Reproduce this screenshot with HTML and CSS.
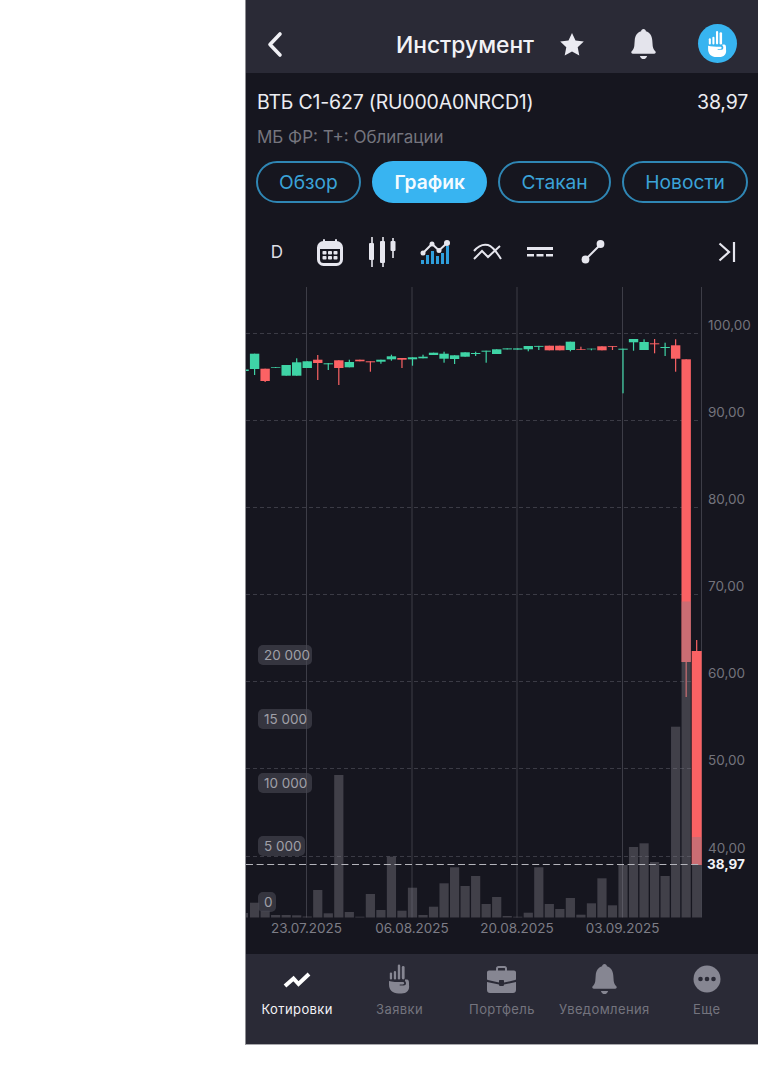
FILE: index.html
```html
<!DOCTYPE html>
<html>
<head>
    <title>Инструмент</title>
    <link rel="stylesheet" href="styles.css">
</head>
<body>
    <svg class="sprite" width="0" height="0">
        <symbol id="bell" viewBox="0 0 24 29">
            <path d="M12 0c1.3 0 2.2.9 2.3 2.2C18.200 3.300 20.200 6.600 20.500 11l.4 5.500c.2 2.300 1.300 3.700 2.500 5 .9 1 .3 2.500-1 2.500H1.600c-1.300 0-1.900-1.500-1-2.500 1.200-1.300 2.300-2.700 2.500-5l.4-5.500C3.800 6.600 5.800 3.300 9.700 2.200 9.800.9 10.700 0 12 0z"/>
            <path d="M8.500 26h7c-.5 1.800-1.900 3-3.500 3s-3-1.200-3.500-3z"/>
        </symbol>
        <symbol id="hand" viewBox="0 0 21 29">
            <rect x="0.800" y="8" width="2.300" height="7" rx="1.100"/>
            <rect x="4.800" y="6.500" width="2.300" height="8.500" rx="1.100"/>
            <rect x="8.800" y="0" width="2.400" height="15" rx="1.200"/>
            <rect x="12.800" y="1.500" width="2.800" height="13.500" rx="1.400"/>
            <path d="M0 16.500c3 1 8 1 13.500 1 1 0 1.700.5 1.700 1.300 0 .7-.6 1.200-1.500 1.200h-3v1h4c1.300 0 2.300-1 2.300-2.300 0-1-.4-1.700-1-2.200V15h2c1.400 0 2 1.300 2 3.500v2C21 25.500 17.500 29 12.500 29h-3C3.500 29 0 25.500 0 20z"/>
        </symbol>
    </svg>

    <div class="phone">
        <div class="header">
            <svg class="back" width="17" height="27" viewBox="0 0 17 27"><path d="M14 3L4 13.500 14 24"/></svg>
            <h1>Инструмент</h1>
            <svg class="star" width="26" height="25" viewBox="0 0 26 25"><path d="M13 1l3.500 7.600 8.300 1-6.100 5.700 1.600 8.200L13 19.400l-7.300 4.100 1.600-8.200L1.200 9.600l8.300-1z"/></svg>
            <svg class="bell" width="25" height="30"><use href="#bell"/></svg>
            <div class="avatar"><svg width="19" height="26"><use href="#hand"/></svg></div>
        </div>

        <div class="info">
            <div class="info-row">
                <span>ВТБ С1-627 (RU000A0NRCD1)</span>
                <span>38,97</span>
            </div>
            <div class="market">МБ ФР: Т+: Облигации</div>
        </div>

        <div class="tabs">
            <div class="tab">Обзор</div>
            <div class="tab active">График</div>
            <div class="tab">Стакан</div>
            <div class="tab">Новости</div>
        </div>

        <div class="toolbar">
            <div class="tool tool-text">D</div>
            <div class="tool">
                <svg width="26" height="27" viewBox="0 0 26 27">
                    <rect x="1.500" y="3.500" width="23" height="22" rx="5" fill="none" stroke="#e6e6ee" stroke-width="3"/>
                    <path d="M1.500 10V7.500a4 4 0 0 1 4-4h15a4 4 0 0 1 4 4V10z" fill="#e6e6ee"/>
                    <path d="M7 1v4M19 1v4" stroke="#e6e6ee" stroke-width="2" stroke-linecap="round"/>
                    <g fill="#e6e6ee">
                        <rect x="5.500" y="12" width="4" height="3.500" rx=".8"/><rect x="11" y="12" width="4" height="3.500" rx=".8"/><rect x="16.500" y="12" width="4" height="3.500" rx=".8"/>
                        <rect x="5.500" y="17" width="4" height="3.500" rx=".8"/><rect x="11" y="17" width="4" height="3.500" rx=".8"/><rect x="16.500" y="17" width="4" height="3.500" rx=".8"/>
                    </g>
                </svg>
            </div>
            <div class="tool">
                <svg width="28" height="30" viewBox="0 0 28 30" fill="#e6e6ee">
                    <rect x="3.200" y="0" width="1.600" height="30"/><rect x="1" y="6" width="5" height="17" rx="1"/>
                    <rect x="14.200" y="0" width="1.600" height="30"/><rect x="12" y="4" width="5" height="22" rx="1"/>
                    <rect x="24.200" y="1" width="1.600" height="20"/><rect x="22.500" y="4" width="5" height="10" rx="1"/>
                </svg>
            </div>
            <div class="tool">
                <svg width="30" height="24" viewBox="0 0 30 24">
                    <g fill="#2f9fdc">
                        <rect x="1" y="20" width="3" height="4"/><rect x="6" y="15" width="3" height="9"/><rect x="11" y="11" width="3" height="13"/><rect x="16" y="16" width="3" height="8"/><rect x="21" y="13" width="3" height="11"/><rect x="26" y="6" width="3" height="18"/>
                    </g>
                    <path d="M3 13L12 4l7 6.500L27 3" fill="none" stroke="#e6e6ee" stroke-width="2"/>
                    <g fill="#e6e6ee"><circle cx="3" cy="13" r="2.500"/><circle cx="12" cy="4" r="2.500"/><circle cx="19" cy="10.500" r="2.500"/><circle cx="27" cy="3" r="3"/></g>
                </svg>
            </div>
            <div class="tool">
                <svg width="29" height="18" viewBox="0 0 29 18" fill="none" stroke="#e6e6ee" stroke-width="2">
                    <path d="M1 8C6 2 11 1 15 2s8 6 13 14"/>
                    <path d="M1 16l8-8 6 6L27 3"/>
                </svg>
            </div>
            <div class="tool">
                <svg width="26" height="10" viewBox="0 0 26 10" fill="#e6e6ee">
                    <rect x="0" y="0" width="26" height="3"/>
                    <rect x="0" y="7" width="7" height="2.500"/><rect x="9.500" y="7" width="7" height="2.500"/><rect x="19" y="7" width="7" height="2.500"/>
                </svg>
            </div>
            <div class="tool">
                <svg width="24" height="24" viewBox="0 0 24 24" fill="#e6e6ee">
                    <path d="M4.500 19.500l15-15" stroke="#e6e6ee" stroke-width="2"/>
                    <circle cx="4.500" cy="19.500" r="3.900"/><circle cx="19.500" cy="4" r="3.900"/>
                </svg>
            </div>
            <div class="tool tool-end">
                <svg width="18" height="20" viewBox="0 0 18 20" fill="none" stroke="#e6e6ee" stroke-width="2.200">
                    <path d="M1.500 1.500L11 10l-9.500 8.500"/>
                    <path d="M16 0v20"/>
                </svg>
            </div>
        </div>

        <svg id="chart" class="chart" width="512" height="667" viewBox="246 287 512 667"></svg>

        <div class="nav">
            <div class="nav-item active">
                <svg width="30" height="30" viewBox="0 0 30 30"><path d="M3 22l8.500-7.500 5 5.500L27 10" fill="none" stroke="#fff" stroke-width="4"/></svg>
                <span>Котировки</span>
            </div>
            <div class="nav-item">
                <svg width="21" height="30"><use href="#hand"/></svg>
                <span>Заявки</span>
            </div>
            <div class="nav-item">
                <svg width="29" height="30" viewBox="0 0 29 30">
                    <path d="M9 7V4.500C9 3 10 2 11.500 2h6C19 2 20 3 20 4.500V7h-2V4.500c0-.3-.2-.5-.5-.5h-6c-.3 0-.5.2-.5.500V7z"/>
                    <path d="M2 6.500h25c1.100 0 2 .9 2 2V15c0 .6-.3 1-.9 1.100L17 18.500V17c0-.6-.4-1-1-1h-3c-.6 0-1 .4-1 1v1.500L.9 16.100C.3 16 0 15.600 0 15V8.500c0-1.100.9-2 2-2z"/>
                    <path d="M0 18l12 2.500c0 .8.4 1.500 1 1.500h3c.6 0 1-.7 1-1.500L29 18v8c0 1.700-1.300 3-3 3H3c-1.700 0-3-1.300-3-3z"/>
                </svg>
                <span>Портфель</span>
            </div>
            <div class="nav-item">
                <svg width="25" height="30"><use href="#bell"/></svg>
                <span>Уведомления</span>
            </div>
            <div class="nav-item">
                <svg width="30" height="30" viewBox="0 0 30 30">
                    <circle cx="15" cy="15" r="13.500"/>
                    <g fill="#2a2a36"><circle cx="8.500" cy="15" r="2.300"/><circle cx="15" cy="15" r="2.300"/><circle cx="21.500" cy="15" r="2.300"/></g>
                </svg>
                <span>Еще</span>
            </div>
        </div>
    </div>

    <script src="chart.js"></script>
</body>
</html>
```

FILE: styles.css
```css
* { box-sizing: border-box; }
html, body { margin: 0; background: white; }
body {
    padding-left: 245px;
    font-family: Inter, "Noto Sans", sans-serif;
    color: #e8e8ee;
}
.sprite { position: absolute; }
svg { display: block; }
.phone {
    width: 513px;
    height: 1045px;
    background: #16161f;
    border-left: 1px solid #8d8d92;
    border-bottom: 1px solid #a8a8ac;
    display: flex;
    flex-direction: column;
}

.header {
    height: 73px;
    flex: none;
    background: #2a2a36;
    display: flex;
    align-items: center;
    padding: 15px 20px 0 20px;
}
.back path {
    fill: none;
    stroke: #f0f0f5;
    stroke-width: 3.600;
    stroke-linecap: round;
    stroke-linejoin: round;
}
h1 {
    margin: 0 0 0 113px;
    width: 138px;
    white-space: nowrap;
    font-size: 22.800px;
    font-weight: 500;
    color: #f2f2f6;
}
.star { fill: #ebebf2; margin-left: 25px; }
.bell { fill: #e4e4ec; margin-left: 46px; }
.avatar {
    width: 39px;
    height: 39px;
    margin-left: 42px;
    margin-top: -1px;
    border-radius: 50%;
    background: #37b4f0;
    display: flex;
    align-items: center;
    justify-content: center;
    fill: white;
}

.info { padding: 16px 10px 0 11px; flex: none; }
.info-row {
    display: flex;
    justify-content: space-between;
    font-size: 19.500px;
    line-height: 26px;
    letter-spacing: -0.200px;
    color: #ecedf2;
}
.market {
    margin-top: 9px;
    font-size: 17px;
    line-height: 26px;
    color: #75757e;
}

.tabs {
    display: flex;
    justify-content: space-between;
    padding: 11px 10px 0 10px;
    flex: none;
}
.tab {
    height: 42px;
    padding: 0 21px;
    border: 2px solid #2f86b4;
    border-radius: 21px;
    font-size: 19.200px;
    line-height: 38px;
    color: #3ba3d8;
    white-space: nowrap;
}
.tab.active {
    background: #38b4f1;
    border-color: #38b4f1;
    color: #f4fbff;
    font-weight: 600;
    padding: 0 20px;
}

.toolbar {
    display: flex;
    align-items: center;
    height: 84px;
    padding: 14px 5px 0 4.600px;
    flex: none;
}
.tool {
    width: 52.700px;
    display: flex;
    justify-content: center;
    align-items: center;
}
.tool-text { font-size: 17px; color: #dedee4; }
.tool-end { margin-left: auto; }

.chart { flex: none; }
.chart text { font-family: Inter, "Noto Sans", sans-serif; }

.nav {
    flex: 1;
    background: #2a2a36;
    display: grid;
    grid-template-columns: repeat(5, 1fr);
    padding-top: 10px;
}
.nav-item {
    display: flex;
    flex-direction: column;
    align-items: center;
    gap: 7px;
    fill: #868692;
    font-size: 13px;
    line-height: 16px;
    letter-spacing: 0.400px;
    color: #74747e;
    white-space: nowrap;
}
.nav-item.active { color: #f2f2f6; }
```

FILE: chart.js
```js
// page coordinates are kept in the viewBox so the numbers read off the screenshot directly
var svg = document.getElementById('chart');
var NS = 'http://www.w3.org/2000/svg';
var GREEN = '#3fd4a6';
var RED = '#fb6264';
var BASE = 917.5;

function add(tag, attrs, text) {
    var el = document.createElementNS(NS, tag);
    for (var k in attrs) el.setAttribute(k, attrs[k]);
    if (text) el.textContent = text;
    svg.appendChild(el);
}

function barX(i) {
    return 254.6 + (i - 1) * 10.526;
}

// grid
[333, 420, 507, 594, 681, 768, 856].forEach(function (y, i) {
    add('line', { x1: 246, x2: 701, y1: y + .5, y2: y + .5, stroke: '#3b3b45', 'stroke-dasharray': '4 3' });
    add('text', { x: 708, y: y - 3, 'font-size': 13.5, fill: '#73737c' }, (100 - i * 10) + ',00');
});
[306.5, 412, 517, 622.5, 701.5].forEach(function (x) {
    add('line', { x1: x, x2: x, y1: 287, y2: BASE, stroke: '#3d3d47' });
});

// candles: [color, open-top, body-bottom, wick-top, wick-bottom]
var g = GREEN, r = RED;
var candles = [
    [g, 369.5, 371, 369, 375], [g, 353.7, 369, 353.7, 375], [r, 368.7, 381, 368.7, 382], [g, 367.3, 368, 367, 368],
    [g, 365, 375.7, 365, 375.7], [g, 362.3, 375.7, 358.3, 375.7], [g, 361.3, 368, 361.3, 368], [r, 359.7, 363, 355, 380],
    [g, 363.3, 364.3, 363, 370], [r, 360.3, 368, 360.3, 385], [g, 362, 367.3, 359.7, 367.3], [r, 359.7, 361.3, 359.7, 361.3],
    [r, 361.3, 362.3, 361.3, 371.7], [g, 359.7, 361.7, 359.7, 363.7], [g, 356.3, 359.3, 354.7, 360.7], [r, 358, 359.7, 358, 368],
    [g, 357.3, 359.3, 357.3, 365.7], [g, 356.7, 358.3, 354.7, 358.3], [g, 352.7, 355, 352.7, 355], [g, 353.7, 358.7, 351.7, 362.7],
    [g, 355.3, 359, 355.3, 364], [g, 352.3, 356.7, 352.3, 356.7], [g, 353, 354, 351.7, 356], [g, 350.7, 351.7, 350.7, 362.7],
    [g, 349.3, 354, 349.3, 354], [g, 348.4, 349.4, 348.4, 349.4], [g, 348.4, 349.6, 348.4, 349.6], [g, 346, 349.3, 346, 351.3],
    [g, 345.9, 346.8, 345.9, 350], [r, 345.7, 350.3, 345.7, 350.3], [r, 345.7, 350.3, 345.7, 350.3], [g, 341.7, 350, 341.7, 351.3],
    [r, 349.3, 350, 346.7, 350], [g, 348.7, 349.3, 348.7, 350.3], [r, 346.3, 350.3, 346.3, 350.3], [r, 346, 346.8, 346, 350],
    [g, 348.7, 349.7, 348.7, 393.3], [g, 339, 342.3, 339, 350.7], [g, 342, 350, 339.3, 350], [r, 343.3, 344.3, 339, 353.3],
    [g, 347, 348, 342.7, 356], [r, 345.3, 358.7, 339.3, 371.7], [r, 359.3, 662, 359.3, 697], [r, 651, 865, 640, 865]
];
candles.forEach(function (c, i) {
    var x = barX(i);
    var w = i === 43 ? 10 : 9.4;
    add('rect', { x: x - .6, y: c[3], width: 1.2, height: c[4] - c[3], fill: c[0] });
    add('rect', { x: x - w / 2, y: c[1], width: w, height: c[2] - c[1], fill: c[0] });
});

// volume, top edge of each bar
var tops = [913, 902.7, 910.7, 915, 915, 915.3, 916.5, 890, 913.3, 775, 912, 916.7, 894, 910, 856.7, 910.7,
    887.7, 915, 906.7, 883.3, 867.3, 886, 876, 904, 897, 916, 916.7, 912.7, 867.3, 904, 909, 898, 914.7,
    903.3, 878.3, 905.3, 865, 847, 843.3, 862, 876, 726.7, 601.5, 837];
tops.forEach(function (top, i) {
    var x = i === 0 ? 246 : barX(i) - 4.6;
    var w = i === 0 ? 2 : 9.2;
    add('rect', { x: x, y: top, width: w, height: BASE - top, fill: 'rgba(130,128,138,0.4)' });
});

// volume scale
[['20 000', 655, 54], ['15 000', 719, 54], ['10 000', 783, 54], ['5 000', 846, 47], ['0', 902, 18]].forEach(function (v) {
    add('rect', { x: 258, y: v[1] - 10, width: v[2], height: 20, rx: 5, fill: 'rgba(70,70,82,0.65)' });
    add('text', { x: 264, y: v[1] + 5, 'font-size': 13.5, fill: '#a0a0a8' }, v[0]);
});

// last price
add('line', { x1: 246, x2: 701, y1: 864.5, y2: 864.5, stroke: '#b4b4bb', 'stroke-width': 1.2, 'stroke-dasharray': '7 3.6' });
add('text', { x: 707, y: 869, 'font-size': 13.5, 'font-weight': 700, fill: '#f2f2f6' }, '38,97');

// dates
[['23.07.2025', 306.5], ['06.08.2025', 412], ['20.08.2025', 517], ['03.09.2025', 622.5]].forEach(function (d) {
    add('text', { x: d[1], y: 933, 'font-size': 13.5, 'text-anchor': 'middle', fill: '#7d7d86' }, d[0]);
});
```
